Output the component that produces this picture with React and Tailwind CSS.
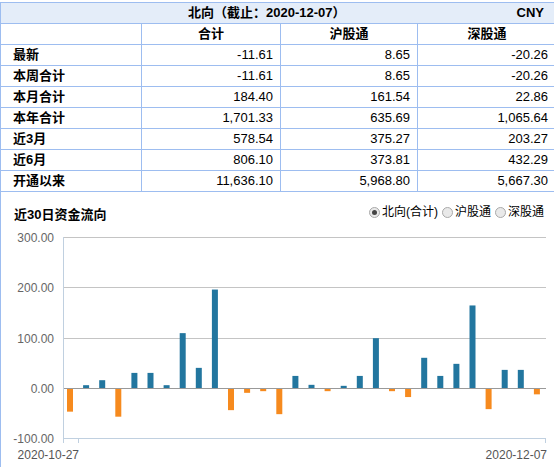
import React from "react";

const rows = [
  ["最新", "-11.61", "8.65", "-20.26"],
  ["本周合计", "-11.61", "8.65", "-20.26"],
  ["本月合计", "184.40", "161.54", "22.86"],
  ["本年合计", "1,701.33", "635.69", "1,065.64"],
  ["近3月", "578.54", "375.27", "203.27"],
  ["近6月", "806.10", "373.81", "432.29"],
  ["开通以来", "11,636.10", "5,968.80", "5,667.30"],
];

const flows = [
  -46, 6.6, 16.5, -56, 31, 31, 6.6, 110, 41, 196.6, -43, -8.6, -5.3, -51, 25,
  7.3, -5.3, 5.3, 25, 100, -5.3, -17, 61, 25, 49, 165, -41, 37, 37, -11.61,
];

const zero = 156.5;
const scale = 0.5033;
const yOf = (v) => zero - v * scale;

function Radio({ checked, label }) {
  return (
    <label className="ml-[3px] flex items-center">
      <span className="mx-[1px] flex h-[11px] w-[11px] items-center justify-center rounded-full border border-[#a9a9a9] bg-[#e9e9e9]">
        {checked && <span className="h-[5px] w-[5px] rounded-full bg-[#444]" />}
      </span>
      <span className="ml-[1px] text-[12px] text-black">{label}</span>
    </label>
  );
}

function FlowChart() {
  const grid = [
    { v: "300.00", y: 5.5 },
    { v: "200.00", y: 55.5 },
    { v: "100.00", y: 106.5 },
  ];
  return (
    <svg width="554" height="235" className="block">
      {grid.map((g) => (
        <g key={g.v}>
          <line x1="62" x2="545" y1={g.y} y2={g.y} stroke="#c4c4c4" />
          <text x="53" y={g.y + 4.5} textAnchor="end" fontSize="12" fill="#666">
            {g.v}
          </text>
        </g>
      ))}
      <text x="53" y={zero + 4.5} textAnchor="end" fontSize="12" fill="#666">
        0.00
      </text>
      <text x="53" y={206.5 + 4.5} textAnchor="end" fontSize="12" fill="#666">
        -100.00
      </text>

      {flows.map((v, i) => {
        const x = 66 + i * 16.1;
        if (v >= 0) {
          return (
            <rect key={i} x={x} y={yOf(v)} width="6" height={zero - yOf(v)} fill="#22769f" />
          );
        }
        return (
          <rect key={i} x={x} y={zero} width="6" height={yOf(v) - zero} fill="#f68a1e" />
        );
      })}

      <line x1="62" x2="545" y1={zero} y2={zero} stroke="#999" />
      <line x1="62" x2="545" y1="206.5" y2="206.5" stroke="#c0d0e0" />
      <line x1="62.5" x2="62.5" y1="5" y2="211" stroke="#c0d0e0" />
      <line x1="77.5" x2="77.5" y1="206" y2="211" stroke="#c0d0e0" />
      <line x1="544.5" x2="544.5" y1="206" y2="211" stroke="#c0d0e0" />

      <text x="78" y="227" textAnchor="end" fontSize="12" fill="#555">
        2020-10-27
      </text>
      <text x="546" y="227" textAnchor="end" fontSize="12" fill="#555">
        2020-12-07
      </text>
    </svg>
  );
}

export default function App() {
  return (
    <div
      className="h-[467px] w-[554px] overflow-hidden bg-white"
      style={{ fontFamily: '"Liberation Sans", "Noto Sans CJK SC", sans-serif' }}
    >
      <div className="mt-[2px] w-[556px] border-l border-[#9dbdf0]">
        <div className="grid grid-cols-[141px_139px_137px_139px] border-t border-[#9dbdf0] text-[13px] text-black">
          <div className="col-span-4 flex h-[21px] items-center border-b border-[#9dbdf0] bg-[#e4edf9] font-bold">
            <span className="flex-1 pl-[16px] text-center">北向（截止：2020-12-07）</span>
            <span className="pr-[13px]">CNY</span>
          </div>

          <div className="h-[21px] border-b border-r border-[#9dbdf0]" />
          {["合计", "沪股通", "深股通"].map((h) => (
            <div
              key={h}
              className="flex h-[21px] items-center justify-center border-b border-r border-[#9dbdf0] font-bold"
            >
              {h}
            </div>
          ))}

          {rows.map((r) => (
            <React.Fragment key={r[0]}>
              <div className="flex h-[21px] items-center border-b border-r border-[#9dbdf0] pl-[12px] font-bold">
                {r[0]}
              </div>
              {r.slice(1).map((n, j) => (
                <div
                  key={j}
                  className={
                    "flex h-[21px] items-center justify-end border-b border-r border-[#9dbdf0] " +
                    (j === 2 ? "pr-[8px]" : "pr-[7px]")
                  }
                >
                  {n}
                </div>
              ))}
            </React.Fragment>
          ))}
        </div>

        <div className="flex h-[40px] items-center justify-between">
          <div className="mt-[5px] pl-[13px] text-[13px] font-bold text-black">近30日资金流向</div>
          <div className="flex items-center pr-[12px]">
            <Radio checked label="北向(合计)" />
            <Radio label="沪股通" />
            <Radio label="深股通" />
          </div>
        </div>

        <FlowChart />
      </div>
    </div>
  );
}
